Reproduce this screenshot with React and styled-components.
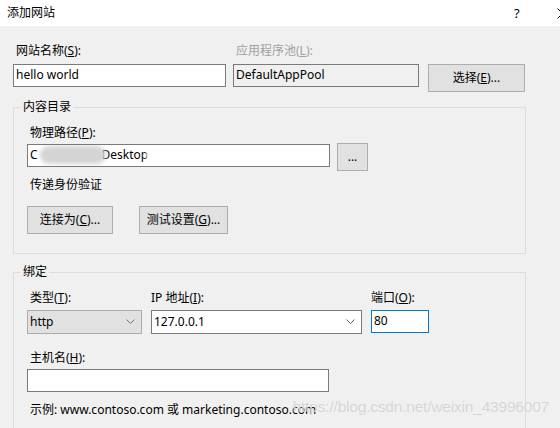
import React from "react";
import styled, { createGlobalStyle } from "styled-components";

const Global = createGlobalStyle`
  html, body {
    margin: 0;
    padding: 0;
    background: #f0f0f0;
  }
  body {
    font-family: "Noto Sans", "Noto Sans CJK SC", sans-serif;
    font-size: 12px;
    color: #000;
  }
`;

const Window = styled.div`
  position: relative;
  width: 560px;
  height: 428px;
  overflow: hidden;
  background: #f0f0f0;
`;

const TitleBar = styled.div`
  height: 26px;
  background: #fff;
  display: flex;
  align-items: center;
  padding-left: 7px;
  line-height: 16px;
  .title {
    flex: 1;
  }
  .help {
    width: 12px;
    margin-right: 31px;
    font-size: 13px;
  }
  svg {
    margin-right: -8px;
  }
`;

const Body = styled.div`
  padding: 17px 0 0 13px;
`;

const TopGrid = styled.div`
  display: grid;
  grid-template-columns: 213px 186px 97px;
  column-gap: 7px;
  row-gap: 5px;
  align-items: start;
  & > :nth-child(3n) {
    margin-left: 2px;
  }
`;

const Label = styled.div`
  line-height: 16px;
  height: 16px;
  padding-left: ${(p) => p.$indent ?? 3}px;
  color: ${(p) => (p.$disabled ? "#a0a0a0" : "#000")};
  white-space: nowrap;
`;

const Field = styled.div`
  box-sizing: border-box;
  width: ${(p) => p.$w}px;
  height: ${(p) => p.$h || 23}px;
  border: 1px solid ${(p) => p.$border || "#7a7a7a"};
  background: ${(p) => p.$bg || "#fff"};
  display: flex;
  align-items: center;
  padding: 0 2px 1px;
  line-height: 16px;
  white-space: nowrap;
  overflow: hidden;
  .value {
    flex: 1;
  }
  svg {
    margin-right: 4px;
  }
`;

const Button = styled.div`
  box-sizing: border-box;
  width: ${(p) => p.$w}px;
  height: ${(p) => p.$h || 28}px;
  border: 1px solid #adadad;
  background: #e1e1e1;
  display: flex;
  align-items: center;
  justify-content: center;
  line-height: 16px;
  white-space: nowrap;
`;

const Group = styled.fieldset`
  box-sizing: border-box;
  width: 513px;
  margin: ${(p) => p.$top}px 0 0;
  padding: 0 0 ${(p) => p.$bottom}px 0;
  border: 1px solid #dcdcdc;
  legend {
    margin-left: 7px;
    padding: 0 2px;
    line-height: 16px;
  }
`;

const Stack = styled.div`
  display: flex;
  flex-direction: column;
  align-items: flex-start;
  gap: ${(p) => p.$gap || 0}px;
  margin-top: ${(p) => p.$mt || 0}px;
  padding-left: ${(p) => p.$pl || 0}px;
`;

const Row = styled.div`
  display: flex;
  align-items: flex-start;
  gap: ${(p) => p.$gap}px;
  margin-top: ${(p) => p.$mt || 0}px;
  padding-left: ${(p) => p.$pl || 0}px;
`;

const Smudge = styled.span`
  display: inline-block;
  width: ${(p) => p.$w}px;
  height: 18px;
  margin: 0 ${(p) => p.$mr || 0}px 0 ${(p) => p.$ml || 0}px;
  vertical-align: middle;
  border-radius: 9px;
  background: ${(p) => p.$tone};
  filter: blur(2px);
`;

const Watermark = styled.div`
  position: absolute;
  right: 11px;
  top: 398px;
  font-family: "Liberation Sans", Arial, sans-serif;
  font-size: 15.5px;
  letter-spacing: -0.2px;
  color: rgba(195, 195, 195, 0.7);
  text-shadow: 0 0 1px rgba(255, 255, 255, 0.9);
  pointer-events: none;
`;

const Chevron = ({ color = "#606060" }) => (
  <svg width="9" height="6" viewBox="0 0 9 6">
    <path d="M0.5 0.5 L4.5 4.5 L8.5 0.5" fill="none" stroke={color} strokeWidth="1" />
  </svg>
);

export default function App() {
  return (
    <Window>
      <Global />
      <TitleBar>
        <span className="title">添加网站</span>
        <span className="help">?</span>
        <svg width="11" height="11" viewBox="0 0 11 11">
          <path d="M0.5 0.5 L10.5 10.5 M10.5 0.5 L0.5 10.5" stroke="#000" strokeWidth="1" />
        </svg>
      </TitleBar>
      <Body>
        <TopGrid>
          <Label>网站名称(<u>S</u>):</Label>
          <Label $disabled>应用程序池(<u>L</u>):</Label>
          <span />
          <Field $w={213}>hello world</Field>
          <Field $w={186} $bg="#f0f0f0">DefaultAppPool</Field>
          <Button $w={97}>选择(<u>E</u>)...</Button>
        </TopGrid>

        <Group $top={7} $bottom={19}>
          <legend>内容目录</legend>
          <Stack $mt={10} $pl={13}>
            <Label>物理路径(<u>P</u>):</Label>
            <Row $gap={7} $mt={3}>
              <Field $w={303}>
                C<Smudge $w={66} $tone="#d4d4d4" $ml={2} $mr={-4} />Desktop
                <Smudge $w={118} $tone="#ffffff" $ml={-2} />
              </Field>
              <Button $w={31} style={{ marginTop: -1 }}>...</Button>
            </Row>
            <Label $indent={3} style={{ marginTop: 6 }}>传递身份验证</Label>
            <Row $gap={26} $mt={13}>
              <Button $w={86} $h={28}>连接为(<u>C</u>)...</Button>
              <Button $w={89} $h={28}>测试设置(<u>G</u>)...</Button>
            </Row>
          </Stack>
        </Group>

        <Group $top={10} $bottom={40}>
          <legend>绑定</legend>
          <Row $gap={9} $mt={10} $pl={13}>
            <Stack $gap={4}>
              <Label>类型(<u>T</u>):</Label>
              <Field $w={115} $h={24} $border="#adadad" $bg="#e1e1e1">
                <span className="value">http</span>
                <Chevron color="#707070" />
              </Field>
            </Stack>
            <Stack $gap={4}>
              <Label $indent={0}>IP 地址(<u>I</u>):</Label>
              <Field $w={211} $h={24}>
                <span className="value">127.0.0.1</span>
                <Chevron />
              </Field>
            </Stack>
            <Stack $gap={4}>
              <Label $indent={0}>端口(<u>O</u>):</Label>
              <Field $w={58} $border="#0078d7">80</Field>
            </Stack>
          </Row>
          <Stack $mt={16} $gap={3} $pl={13}>
            <Label>主机名(<u>H</u>):</Label>
            <Field $w={302}> </Field>
            <Label style={{ marginTop: 7 }}>示例: www.contoso.com 或 marketing.contoso.com</Label>
          </Stack>
        </Group>
      </Body>
      <Watermark>https://blog.csdn.net/weixin_43996007</Watermark>
    </Window>
  );
}
